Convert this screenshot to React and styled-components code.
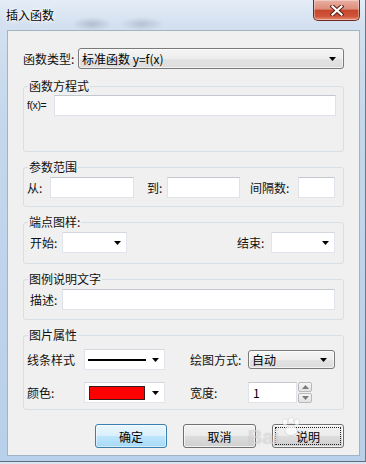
import React from 'react';
import styled, { createGlobalStyle } from 'styled-components';

const FONT = `"Noto Sans CJK SC", "Noto Sans", sans-serif`;

const GlobalStyle = createGlobalStyle`
  html, body { margin: 0; padding: 0; background: #c3d6ec; }
  body { font-family: ${FONT}; font-size: 12px; color: #000; }
  * { box-sizing: border-box; }
`;

const Frame = styled.div`
  width: 366px;
  height: 464px;
  display: flex;
  flex-direction: column;
  padding: 0 6px 8px 7px;
  font-family: ${FONT};
  font-size: 12px;
  background:
    radial-gradient(ellipse 20px 7px at 92px 24px, rgba(110, 125, 145, 0.35), transparent),
    radial-gradient(ellipse 22px 7px at 142px 24px, rgba(110, 125, 145, 0.3), transparent),
    linear-gradient(to bottom, #e4edf7 0px, #d3e0ef 26px, #c4d7ec 120px, #b9d0ea 100%);
  box-shadow: inset 0 -2px 0 #dce5ef, inset 0 -3px 0 #5f6d7c, inset -1px 0 0 #6a7886;
`;

const TitleBar = styled.div`
  height: 30px;
  flex: none;
  display: flex;
  align-items: flex-start;
`;

const Title = styled.div`
  margin-top: 8px;
  margin-left: -1px;
  line-height: 14px;
  font-size: 12px;
  color: #000;
  text-shadow: 0 0 6px #fff, 0 0 3px #fff, 0 0 1px #fff;
`;

const CloseButton = styled.div`
  margin-left: auto;
  width: 47px;
  height: 21px;
  display: flex;
  align-items: center;
  justify-content: center;
  border: 1px solid #6e2b20;
  border-top: none;
  border-radius: 0 0 5px 5px;
  background: linear-gradient(to bottom, #eab0a2 0%, #dd8d7a 45%, #c7472d 52%, #cf553a 82%, #e6937a 100%);
  box-shadow: inset 0 0 0 1px rgba(255, 255, 255, 0.35);
`;

const Client = styled.div`
  position: relative;
  flex: 1;
  display: flex;
  flex-direction: column;
  border: 1px solid #a4b3c4;
  background: #f0f0f0;
  padding: 17px 15px 7px 15px;
`;

const Row = styled.div`
  display: flex;
  align-items: center;
  height: 21px;
  margin-top: ${p => p.$mt || 0}px;
`;

const Label = styled.span`
  flex: none;
  width: ${p => p.$w}px;
  margin-left: ${p => p.$ml || 0}px;
  line-height: 21px;
  white-space: nowrap;
  font-size: 12px;
  color: #111;
`;

const SmallLabel = styled(Label)`
  font-family: "Liberation Sans", Arial, sans-serif;
  font-size: 10.5px;
  letter-spacing: -0.4px;
`;

const DropList = styled.div`
  flex: ${p => (p.$w ? 'none' : '1')};
  width: ${p => (p.$w ? `${p.$w}px` : 'auto')};
  height: ${p => p.$h || 21}px;
  display: flex;
  align-items: center;
  padding: 0 7px 0 3px;
  border: 1px solid #7a7a7a;
  border-radius: 3px;
  background: linear-gradient(to bottom, #f5f5f5 0%, #ededed 50%, #e3e3e3 51%, #dcdcdc 100%);
  box-shadow: inset 0 0 0 1px rgba(255, 255, 255, 0.6);
  line-height: 17px;
  white-space: nowrap;
`;

const ComboBox = styled.div`
  flex: none;
  width: ${p => p.$w}px;
  height: 21px;
  display: flex;
  align-items: center;
  padding: 0 5px 0 3px;
  background: #fff;
  border: 1px solid #e1e4ea;
  border-top-color: #d3d7de;
`;

const TextBox = styled.div`
  flex: ${p => (p.$w ? 'none' : '1')};
  width: ${p => (p.$w ? `${p.$w}px` : 'auto')};
  height: 21px;
  padding-left: 4px;
  line-height: 19px;
  background: #fff;
  border: 1px solid #dfe3e9;
  border-top-color: #c3c7ce;
`;

const ArrowWrap = styled.span`
  margin-left: auto;
  display: flex;
`;

const Arrow = () => (
  <ArrowWrap>
    <svg width="7" height="4" viewBox="0 0 7 4">
      <path d="M0 0H7L3.5 4Z" fill="#000" />
    </svg>
  </ArrowWrap>
);

const Group = styled.fieldset`
  margin: ${p => (p.$mt === undefined ? 8 : p.$mt)}px 0 0 0;
  padding: 0;
  min-width: 0;
  border: 1px solid #d5dfe5;
  border-radius: 3px;
`;

const Legend = styled.legend`
  margin-left: 4px;
  padding: 0 1px;
  font-size: 12px;
  line-height: 14px;
  color: #111;
`;

const GroupBody = styled.div`
  display: flex;
  flex-direction: column;
  padding: ${p => p.$p};
`;

const Spacer = styled.div`
  flex: 1;
`;

const LineSample = styled.div`
  width: 58px;
  height: 2px;
  background: #000;
`;

const ColorSwatch = styled.div`
  width: 56px;
  height: 14px;
  margin-left: 1px;
  background: #ff0000;
  border: 1px solid #3a1a1a;
`;

const SpinButtons = styled.div`
  flex: none;
  display: flex;
  flex-direction: column;
  gap: 1px;
  margin-left: 1px;
  width: 14px;
  height: 21px;
`;

const SpinBtn = styled.div`
  height: 10px;
  display: flex;
  align-items: center;
  justify-content: center;
  border: 1px solid #b9b9b9;
  border-radius: 2px;
  background: linear-gradient(to bottom, #f6f6f6, #e2e2e2);
`;

const ButtonRow = styled.div`
  display: flex;
  justify-content: flex-end;
  gap: 16px;
  margin-top: 14px;
`;

const Button = styled.div`
  width: ${p => p.$w}px;
  height: 24px;
  display: flex;
  align-items: center;
  justify-content: center;
  font-size: 12px;
  color: #000;
  border: 1px solid ${p => (p.$default ? '#3c7fb1' : '#707070')};
  border-radius: 3px;
  background: ${p =>
    p.$default
      ? 'linear-gradient(to bottom, #eaf6fd 0%, #d9f0fc 50%, #bee6fd 51%, #a7d9f5 100%)'
      : 'linear-gradient(to bottom, #f2f2f2 0%, #ebebeb 50%, #dddddd 51%, #cfcfcf 100%)'};
  box-shadow: inset 0 0 0 1px rgba(255, 255, 255, ${p => (p.$default ? 0.5 : 0.7)});
  outline: ${p => (p.$focus ? '1px dotted #222' : 'none')};
  outline-offset: -4px;
`;

const Watermark = styled.div`
  position: absolute;
  left: 240px;
  top: 386px;
  display: flex;
  align-items: flex-end;
  gap: 1px;
  font-family: "Liberation Sans", Arial, sans-serif;
  font-weight: bold;
  font-size: 20px;
  color: rgba(255, 255, 255, 0.55);
  text-shadow: 0 0 1px rgba(0, 0, 0, 0.25);
  pointer-events: none;
`;

const Paw = () => (
  <svg width="22" height="20" viewBox="0 0 22 20" style={{ marginBottom: 12 }}>
    <g fill="rgba(255,255,255,0.7)" stroke="rgba(0,0,0,0.15)" strokeWidth="0.6">
      <ellipse cx="5" cy="5" rx="2.6" ry="3.2" />
      <ellipse cx="11" cy="3.4" rx="2.6" ry="3.2" />
      <ellipse cx="17" cy="5" rx="2.6" ry="3.2" />
      <ellipse cx="11" cy="13.5" rx="6" ry="5" />
    </g>
  </svg>
);

const CloseGlyph = () => (
  <svg width="14" height="11" viewBox="0 0 14 11">
    <path d="M2.5 1.5L11.5 9.5M11.5 1.5L2.5 9.5" stroke="#5b1f15" strokeWidth="4.2" strokeLinecap="square" />
    <path d="M2.5 1.5L11.5 9.5M11.5 1.5L2.5 9.5" stroke="#fff" strokeWidth="2.2" strokeLinecap="square" />
  </svg>
);

const SpinArrow = ({ up }) => (
  <svg width="7" height="4" viewBox="0 0 7 4">
    <path d={up ? 'M0 4H7L3.5 0Z' : 'M0 0H7L3.5 4Z'} fill="#7c7c7c" />
  </svg>
);

export default function App() {
  return (
    <>
      <GlobalStyle />
      <Frame>
        <TitleBar>
          <Title>插入函数</Title>
          <CloseButton>
            <CloseGlyph />
          </CloseButton>
        </TitleBar>
        <Client>
          <Row>
            <Label $w={55}>函数类型:</Label>
            <DropList>
              标准函数 y=f(x)
              <Arrow />
            </DropList>
          </Row>

          <Group $mt={10}>
            <Legend>函数方程式</Legend>
            <GroupBody $p="2px 7px 35px 3px">
              <Row>
                <SmallLabel $w={27}>f(x)=</SmallLabel>
                <TextBox />
              </Row>
            </GroupBody>
          </Group>

          <Group>
            <Legend>参数范围</Legend>
            <GroupBody $p="3px 8px 8px 3px">
              <Row>
                <Label $w={23}>从:</Label>
                <TextBox $w={84} />
                <Label $w={20} $ml={13}>到:</Label>
                <TextBox $w={73} />
                <Label $w={48} $ml={10}>间隔数:</Label>
                <TextBox $w={37} />
              </Row>
            </GroupBody>
          </Group>

          <Group>
            <Legend>端点图样:</Legend>
            <GroupBody $p="3px 8px 10px 6px">
              <Row>
                <Label $w={32}>开始:</Label>
                <ComboBox $w={65}>
                  <Arrow />
                </ComboBox>
                <Spacer />
                <Label $w={34}>结束:</Label>
                <ComboBox $w={64}>
                  <Arrow />
                </ComboBox>
              </Row>
            </GroupBody>
          </Group>

          <Group>
            <Legend>图例说明文字</Legend>
            <GroupBody $p="3px 8px 9px 6px">
              <Row>
                <Label $w={32}>描述:</Label>
                <TextBox />
              </Row>
            </GroupBody>
          </Group>

          <Group>
            <Legend>图片属性</Legend>
            <GroupBody $p="7px 8px 6px 3px">
              <Row>
                <Label $w={57}>线条样式</Label>
                <ComboBox $w={81}>
                  <LineSample />
                  <Arrow />
                </ComboBox>
                <Label $w={58} $ml={25}>绘图方式:</Label>
                <DropList $w={87} $h={19}>
                  自动
                  <Arrow />
                </DropList>
              </Row>
              <Row $mt={12}>
                <Label $w={57}>颜色:</Label>
                <ComboBox $w={81}>
                  <ColorSwatch />
                  <Arrow />
                </ComboBox>
                <Label $w={58} $ml={25}>宽度:</Label>
                <TextBox $w={49}>1</TextBox>
                <SpinButtons>
                  <SpinBtn>
                    <SpinArrow up />
                  </SpinBtn>
                  <SpinBtn>
                    <SpinArrow />
                  </SpinBtn>
                </SpinButtons>
              </Row>
            </GroupBody>
          </Group>

          <ButtonRow>
            <Button $w={72} $default>确定</Button>
            <Button $w={73}>取消</Button>
            <Button $w={72} $focus>说明</Button>
          </ButtonRow>

          <Watermark>
            Bai
            <Paw />
          </Watermark>
        </Client>
      </Frame>
    </>
  );
}
